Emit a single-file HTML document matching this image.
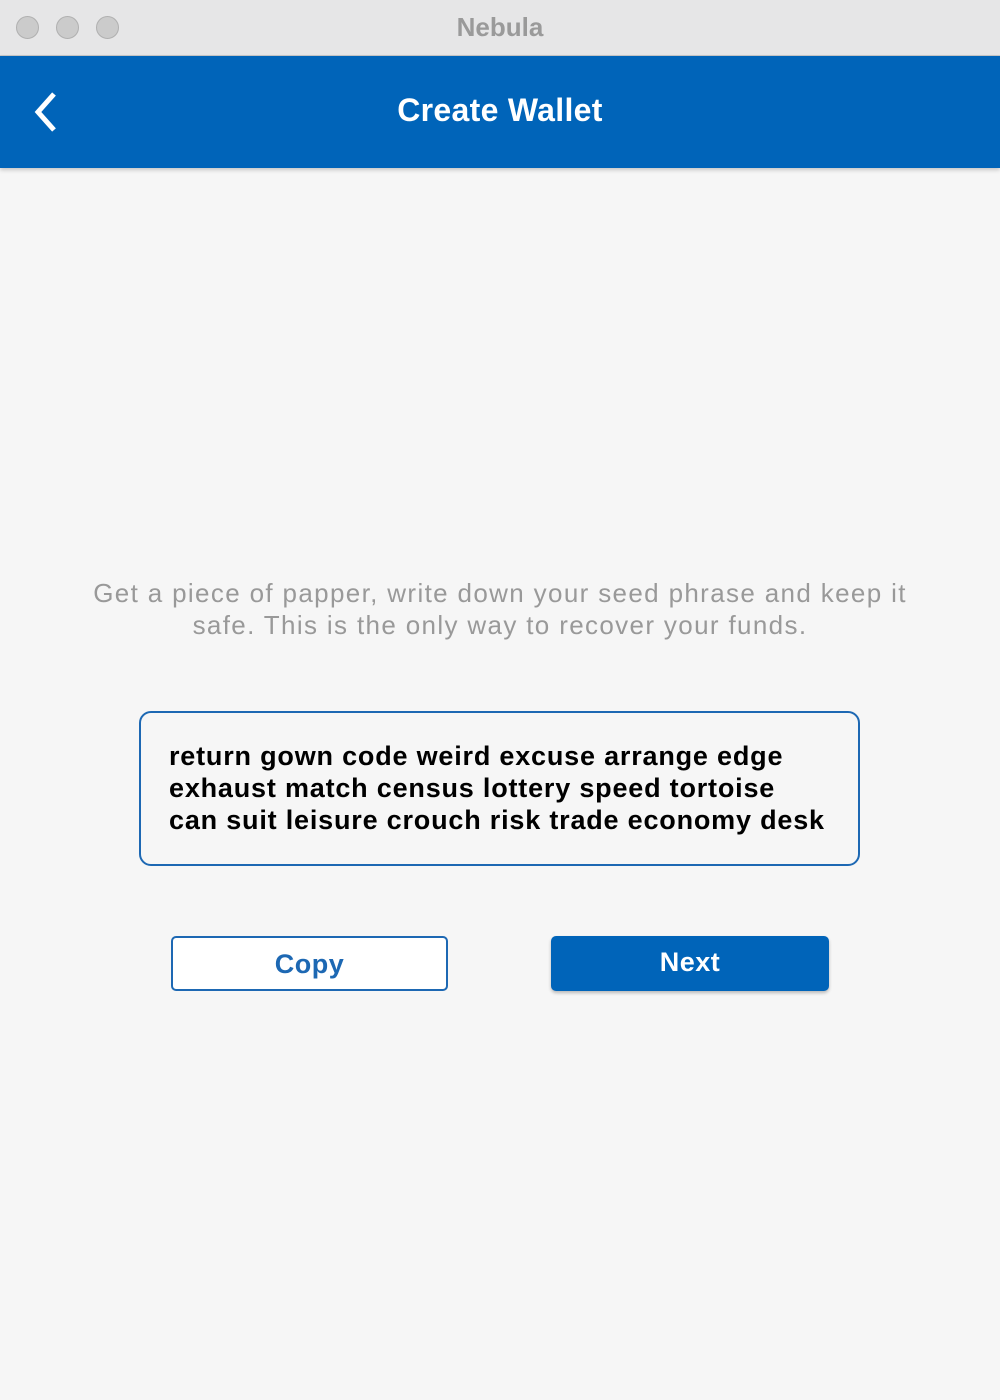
<!DOCTYPE html>
<html><head><style>
body{margin:0;width:1000px;height:1400px;background:#f6f6f6;font-family:"Liberation Sans",sans-serif;position:relative;overflow:hidden}
.tb{position:absolute;left:0;top:0;width:1000px;height:56px;background:#e6e6e7;border-bottom:1px solid #c8c8c8;box-sizing:border-box}
.dot{position:absolute;top:16px;width:23px;height:23px;border-radius:50%;background:#cbcbcb;border:1px solid #b0b0b0;box-sizing:border-box}
.tt{position:absolute;left:0;right:0;top:12px;text-align:center;font-size:26px;font-weight:bold;color:#9a9a9a}
.hd{position:absolute;left:0;top:56px;width:1000px;height:112px;background:#0064b9;box-shadow:0 2px 4px rgba(0,0,0,.2)}
.hd .t{position:absolute;left:0;right:0;top:36px;text-align:center;color:#fff;font-size:32px;font-weight:bold;letter-spacing:0.3px}
.p{position:absolute;left:40px;right:40px;top:577px;text-align:center;color:#999;font-size:26px;line-height:32px;letter-spacing:1.35px;white-space:nowrap}
.box{position:absolute;left:139px;top:711px;width:721px;height:155px;border:2px solid #1d68b3;border-radius:12px;box-sizing:border-box;padding:27px 0 0 28px;font-weight:bold;font-size:27px;line-height:32px;color:#000;letter-spacing:0.8px;white-space:nowrap}
.b{position:absolute;top:936px;height:55px;border-radius:5px;box-sizing:border-box;text-align:center;line-height:53px;font-weight:bold;font-size:27px;letter-spacing:0.5px}
</style></head><body>
<div class="tb"><div class="dot" style="left:16px"></div><div class="dot" style="left:56px"></div><div class="dot" style="left:96px"></div><div class="tt">Nebula</div></div>
<div class="hd"><svg style="position:absolute;left:30px;top:34px" width="30" height="44" viewBox="0 0 30 44"><path d="M24 4 L8 22 L24 40" fill="none" stroke="#fff" stroke-width="5"/></svg><div class="t">Create Wallet</div></div>
<div class="p">Get a piece of papper, write down your seed phrase and keep it<br>safe. This is the only way to recover your funds.</div>
<div class="box">return gown code weird excuse arrange edge<br>exhaust match census lottery speed tortoise<br>can suit leisure crouch risk trade economy desk</div>
<div class="b" style="left:171px;width:277px;border:2px solid #1d68b3;color:#1d68b3;background:#fff">Copy</div>
<div class="b" style="left:551px;width:278px;background:#0064b9;color:#fff;box-shadow:0 2px 3px rgba(0,0,0,.25)">Next</div>
</body></html>
